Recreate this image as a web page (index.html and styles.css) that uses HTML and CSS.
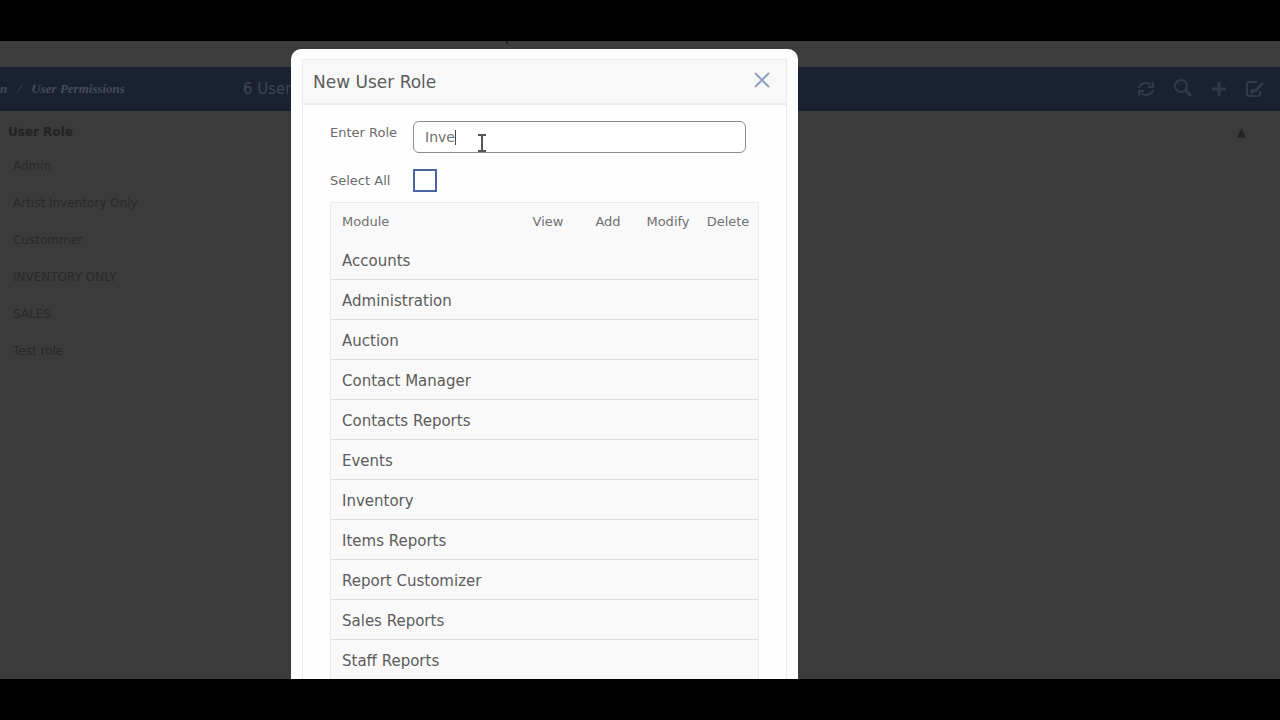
FILE: index.html
```html
<!DOCTYPE html>
<html lang="en">
<head>
	<meta charset="utf-8">
	<meta name="viewport" content="width=device-width, initial-scale=1">
	<title>User Permissions</title>
	<link rel="stylesheet" href="styles.css">
</head>
<body>
	<div class="stage">
		<div class="page">
			<div class="page-top"><span class="tick"></span></div>
			<header class="toolbar">
				<nav class="breadcrumb"><a href="#">n</a> <span>/</span> <a href="#">User Permissions</a></nav>
				<span class="count">6 Users</span>
				<div class="tools">
					<button type="button" aria-label="Refresh">
						<svg width="18" height="18" viewBox="0 0 18 18"><path d="M2 8a7 6 0 0 1 12-3M16 2v5h-5M16 10a7 6 0 0 1-12 3M2 16v-5h5"/></svg>
					</button>
					<button type="button" aria-label="Search">
						<svg width="20" height="20" viewBox="0 0 20 20"><circle cx="8" cy="7" r="6"/><path d="M12 11l6 6" stroke-width="3"/></svg>
					</button>
					<button type="button" aria-label="Add">
						<svg width="16" height="16" viewBox="0 0 16 16"><path d="M8 1v14M1 8h14" stroke-width="3"/></svg>
					</button>
					<button type="button" aria-label="Edit">
						<svg width="20" height="18" viewBox="0 0 20 18"><path d="M12 2H4a2 2 0 0 0-2 2v10a2 2 0 0 0 2 2h9a2 2 0 0 0 2-2v-3"/><path d="M18 3l-8 8-3 1 1-3" stroke-width="3"/></svg>
					</button>
				</div>
			</header>
			<table class="roles">
				<thead>
					<tr><th>User Role</th><th class="sort">▲</th></tr>
				</thead>
				<tbody>
					<tr><td colspan="2">Admin</td></tr>
					<tr><td colspan="2">Artist Inventory Only</td></tr>
					<tr><td colspan="2">Custommer</td></tr>
					<tr><td colspan="2">INVENTORY ONLY</td></tr>
					<tr><td colspan="2">SALES</td></tr>
					<tr><td colspan="2">Test role</td></tr>
				</tbody>
			</table>
		</div>

		<div class="modal" role="dialog" aria-labelledby="modal-title">
			<div class="modal-inner">
				<div class="modal-header">
					<h1 id="modal-title">New User Role</h1>
					<button type="button" class="close" aria-label="Close">
						<svg width="16" height="16" viewBox="0 0 16 16"><path d="M1 1l14 14M15 1L1 15"/></svg>
					</button>
				</div>
				<form class="modal-body">
					<div class="field">
						<label for="role">Enter Role</label>
						<div class="input-wrap">
							<input type="text" id="role" value="Inve">
							<span class="caret"></span>
							<svg class="pointer" width="10" height="18" viewBox="0 0 10 18"><path d="M1 1h3l1 1 1-1h3M5 2v14M1 17h3l1-1 1 1h3"/></svg>
						</div>
					</div>
					<div class="field field-check">
						<label for="select-all">Select All</label>
						<input type="checkbox" id="select-all">
					</div>
					<table class="modules">
						<thead>
							<tr><th>Module</th><th>View</th><th>Add</th><th>Modify</th><th>Delete</th></tr>
						</thead>
						<tbody>
							<tr><td colspan="5">Accounts</td></tr>
							<tr><td colspan="5">Administration</td></tr>
							<tr><td colspan="5">Auction</td></tr>
							<tr><td colspan="5">Contact Manager</td></tr>
							<tr><td colspan="5">Contacts Reports</td></tr>
							<tr><td colspan="5">Events</td></tr>
							<tr><td colspan="5">Inventory</td></tr>
							<tr><td colspan="5">Items Reports</td></tr>
							<tr><td colspan="5">Report Customizer</td></tr>
							<tr><td colspan="5">Sales Reports</td></tr>
							<tr><td colspan="5">Staff Reports</td></tr>
						</tbody>
					</table>
				</form>
			</div>
		</div>
	</div>
</body>
</html>
```
FILE: styles.css
```css
* {
	margin: 0px;
	padding: 0px;
	box-sizing: border-box;
}
body {
	background: black;
	padding: 41px 0px;
	font-family: 'DejaVu Sans', sans-serif;
	font-size: 13px;
}

.stage {
	position: relative;
	height: calc(100vh - 82px);
	overflow: hidden;
	background-color: #3b3b3c;
}

/* dimmed page behind the modal */
.page-top {
	height: 26px;
	background-color: #3d3d3d;
	padding-left: 506px;
}

.tick {
	display: block;
	width: 2px;
	height: 3px;
	background-color: #202020;
}

.toolbar {
	display: flex;
	align-items: center;
	height: 44px;
	padding-right: 15px;
	background-color: #1a2130;
	color: #3f4653;
}

.breadcrumb {
	width: 243px;
	font-family: 'Liberation Serif', serif;
	font-size: 13px;
	font-style: italic;
	font-weight: bold;
	white-space: pre;
}

.breadcrumb a {
	color: #454c5a;
	text-decoration: none;
}

.breadcrumb span {
	margin: 0px 7px;
}

.count {
	font-size: 15px;
}

.tools {
	display: flex;
	align-items: center;
	gap: 18px;
	margin-left: auto;
}

.tools button {
	display: flex;
	border: none;
	background: none;
}

.tools svg {
	fill: none;
	stroke: #323a47;
	stroke-width: 2;
}

.roles {
	width: 100%;
	border-collapse: collapse;
	color: #29292a;
	font-size: 12px;
}

.roles th {
	height: 36px;
	padding: 6px 8px 0px;
	text-align: left;
	color: #222223;
}

.roles .sort {
	padding-right: 34px;
	text-align: right;
}

.roles td {
	height: 37px;
	padding-left: 13px;
}

.modal {
	position: absolute;
	top: 8px;
	left: 291px;
	width: 507px;
	padding: 10px 11px;
	background-color: #fefefe;
	border-radius: 10px;
	color: #5c5c5c;
}

.modal-inner {
	border: 1px solid #ebebeb;
}

.modal-header {
	display: flex;
	justify-content: space-between;
	align-items: center;
	height: 45px;
	padding: 0px 16px 0px 10px;
	background-color: #f8f8f8;
	border-bottom: 2px solid #ebebeb;
}

.modal-header h1 {
	font-size: 17px;
	font-weight: normal;
}

.close {
	display: flex;
	align-self: flex-start;
	margin-top: 12px;
	border: none;
	background: none;
	cursor: pointer;
}

.close svg {
	fill: none;
	stroke: #8fa2c2;
	stroke-width: 2;
}

.modal-body {
	padding: 16px 27px 40px;
}

.field {
	display: flex;
	height: 32px;
}

.field label {
	width: 83px;
	line-height: 24px;
	color: #6a6a6a;
}

.input-wrap {
	position: relative;
	width: 333px;
}

.input-wrap input {
	width: 100%;
	height: 32px;
	padding: 0px 11px;
	border: 1px solid #8c8c8c;
	border-radius: 6px;
	background-color: white;
	color: #707070;
	font-family: inherit;
	font-size: 14px;
}

.caret {
	position: absolute;
	left: 42px;
	top: 9px;
	width: 1px;
	height: 15px;
	background-color: #444;
}

.pointer {
	position: absolute;
	left: 64px;
	top: 13px;
	fill: none;
	stroke: #555;
	stroke-width: 2;
}

.field-check {
	margin-top: 16px;
	height: 33px;
}

.field-check input {
	appearance: none;
	width: 24px;
	height: 23px;
	border: 2px solid #4a66a0;
	background-color: white;
}

.modules {
	width: 429px;
	border: 1px solid #ebebeb;
	border-spacing: 0px;
	table-layout: fixed;
	background-color: #f9f9f9;
}

.modules th {
	height: 37px;
	font-size: 13px;
	font-weight: normal;
	color: #707070;
}

.modules th:first-child {
	width: 187px;
	padding-left: 11px;
	text-align: left;
}

.modules td {
	height: 40px;
	padding: 2px 0px 0px 11px;
	border-bottom: 1px solid #dedede;
	font-size: 15px;
}
```
